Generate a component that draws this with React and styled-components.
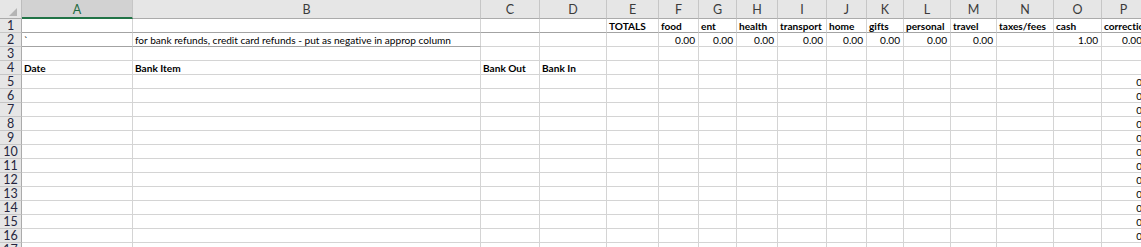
import styled, { createGlobalStyle, css } from "styled-components";

const GlobalStyle = createGlobalStyle`
  html, body {
    margin: 0;
    padding: 0;
    background: #ffffff;
    overflow: hidden;
  }
`;

// column letters with their widths in pixels (border included)
const columns = [
  { key: "A", width: 111 },
  { key: "B", width: 348 },
  { key: "C", width: 59 },
  { key: "D", width: 67 },
  { key: "E", width: 52 },
  { key: "F", width: 40 },
  { key: "G", width: 38 },
  { key: "H", width: 41 },
  { key: "I", width: 49 },
  { key: "J", width: 40 },
  { key: "K", width: 37 },
  { key: "L", width: 47 },
  { key: "M", width: 46 },
  { key: "N", width: 57 },
  { key: "O", width: 48 },
  { key: "P", width: 44 },
];

const totals = {
  E: { text: "TOTALS", bold: true },
  F: { text: "food", bold: true },
  G: { text: "ent", bold: true },
  H: { text: "health", bold: true },
  I: { text: "transport", bold: true },
  J: { text: "home", bold: true },
  K: { text: "gifts", bold: true },
  L: { text: "personal", bold: true },
  M: { text: "travel", bold: true },
  N: { text: "taxes/fees", bold: true },
  O: { text: "cash", bold: true },
  P: { text: "correction", bold: true },
};

const sums = {
  A: { text: "`" },
  B: { text: "for bank refunds, credit card refunds - put as negative in approp column" },
  F: { text: "0.00", num: true },
  G: { text: "0.00", num: true },
  H: { text: "0.00", num: true },
  I: { text: "0.00", num: true },
  J: { text: "0.00", num: true },
  K: { text: "0.00", num: true },
  L: { text: "0.00", num: true },
  M: { text: "0.00", num: true },
  O: { text: "1.00", num: true },
  P: { text: "0.00", num: true },
};

const headings = {
  A: { text: "Date", bold: true },
  B: { text: "Bank Item", bold: true },
  C: { text: "Bank Out", bold: true },
  D: { text: "Bank In", bold: true },
};

const rows = [
  { n: 1, cells: totals, edge: "all" },
  { n: 2, cells: sums, edge: ["A", "B"] },
  { n: 3, cells: {} },
  { n: 4, cells: headings },
];
for (let n = 5; n <= 17; n++) {
  rows.push({ n, cells: { P: { text: "0", num: true } } });
}

const Sheet = styled.div`
  display: grid;
  grid-template-columns: 22px ${columns.map((c) => `${c.width}px`).join(" ")};
  grid-template-rows: 19px;
  grid-auto-rows: 14px;
  width: max-content;
  font-family: Lato, "Liberation Sans", sans-serif;
  font-variant-ligatures: none;
`;

const Corner = styled.div`
  position: relative;
  box-sizing: border-box;
  background: #e6e6e6;
  border-right: 1px solid #bdbdbd;
  border-bottom: 1px solid #ababab;

  &::after {
    content: "";
    position: absolute;
    right: 4px;
    bottom: 2px;
    width: 0;
    height: 0;
    border-left: 8px solid transparent;
    border-bottom: 8px solid #b5b5b5;
  }
`;

const ColHeader = styled.div`
  box-sizing: border-box;
  display: flex;
  align-items: center;
  justify-content: center;
  padding-top: 1px;
  background: #e6e6e6;
  color: #3b3b3b;
  font-size: 12.5px;
  border-right: 1px solid #c6c6c6;
  border-bottom: 1px solid #ababab;

  ${(p) =>
    p.$selected &&
    css`
      background: #d2d2d2;
      color: #1f6b41;
      border-bottom: 2px solid #217346;
      padding-top: 2px;
    `}
`;

const RowHeader = styled.div`
  box-sizing: border-box;
  display: flex;
  align-items: center;
  justify-content: center;
  background: #e6e6e6;
  color: #262640;
  font-size: 12.5px;
  line-height: 13px;
  border-right: 1px solid #ababab;
  border-bottom: 1px solid #c6c6c6;
`;

const Cell = styled.div`
  box-sizing: border-box;
  display: flex;
  align-items: flex-end;
  justify-content: ${(p) => (p.$num ? "flex-end" : "flex-start")};
  padding: 0 3px 0 2px;
  overflow: hidden;
  white-space: nowrap;
  color: #000000;
  font-size: 10.1px;
  line-height: 12px;
  font-weight: ${(p) => (p.$bold ? 700 : 400)};
  border-right: 1px solid #d4d4d4;
  border-bottom: 1px solid ${(p) => (p.$edge ? "#a3a3a3" : "#d4d4d4")};
`;

function App() {
  return (
    <>
      <GlobalStyle />
      <Sheet>
        <Corner />
        {columns.map((c) => (
          <ColHeader key={c.key} $selected={c.key === "A"}>
            {c.key}
          </ColHeader>
        ))}
        {rows.map((row) => [
          <RowHeader key={`h${row.n}`}>{row.n}</RowHeader>,
          ...columns.map((c) => {
            const cell = row.cells[c.key];
            const edge =
              row.edge === "all" || (Array.isArray(row.edge) && row.edge.includes(c.key));
            return (
              <Cell
                key={`${c.key}${row.n}`}
                $bold={cell?.bold}
                $num={cell?.num}
                $edge={edge}
              >
                {cell?.text}
              </Cell>
            );
          }),
        ])}
      </Sheet>
    </>
  );
}

export default App;
